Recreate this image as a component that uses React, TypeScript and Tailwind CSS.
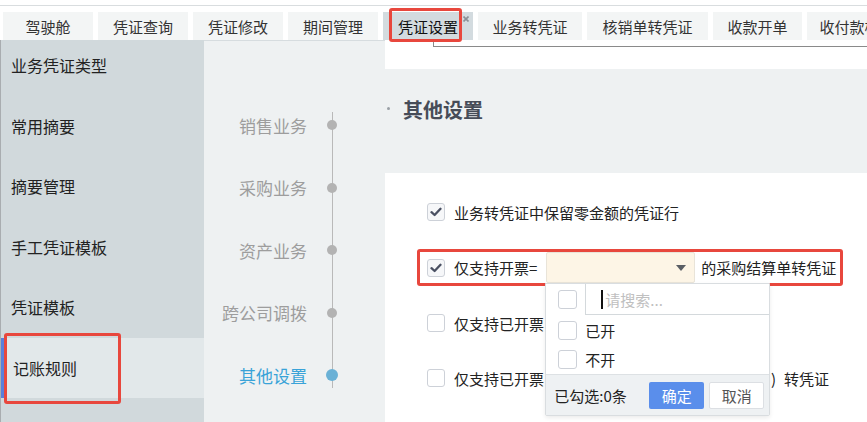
import React from 'react';

const tabs = [
  { t: '驾驶舱', w: 'w-[90px]' },
  { t: '凭证查询', w: 'w-[90px]' },
  { t: '凭证修改', w: 'w-[90px]' },
  { t: '期间管理', w: 'w-[90px]' },
  { t: '凭证设置', w: 'w-[90px]', active: true },
  { t: '业务转凭证', w: 'w-[104px]' },
  { t: '核销单转凭证', w: 'w-[121px]' },
  { t: '收款开单', w: 'w-[89px]' },
  { t: '收付款核销', w: 'w-[100px]' },
];

const sideItems = ['业务凭证类型', '常用摘要', '摘要管理', '手工凭证模板', '凭证模板', '记账规则'];
const steps = ['销售业务', '采购业务', '资产业务', '跨公司调拨', '其他设置'];

function Box({ checked = false, size = 'w-[18px] h-[18px]' }: { checked?: boolean; size?: string }) {
  return (
    <span
      className={`${size} shrink-0 rounded-[3px] border border-[#cdd1d8] flex items-center justify-center ${
        checked ? 'bg-[#f6f7f9]' : 'bg-white'
      }`}
    >
      {checked && (
        <svg width="12" height="10" viewBox="0 0 12 10">
          <path d="M1.5 5.2 L4.6 8 L10.5 1.8" fill="none" stroke="#4a5062" strokeWidth="2.3" strokeLinecap="round" strokeLinejoin="round" />
        </svg>
      )}
    </span>
  );
}

export default function App() {
  return (
    <div className="w-[867px] h-[422px] overflow-hidden bg-white flex flex-col font-['Noto_Sans_CJK_SC','Microsoft_YaHei',sans-serif] text-[#333]">
      {/* Tab bar */}
      <div className="h-[40px] shrink-0 pt-[5px] bg-white">
        <div className="border-t border-[#d9dddf] pt-[6px] pl-[3px] flex gap-[5px] whitespace-nowrap">
          {tabs.map((tab) => (
            <div
              key={tab.t}
              className={`${tab.w} h-[28px] shrink-0 relative flex items-center justify-center text-[15px] leading-none ${
                tab.active ? 'bg-[#d3dbdf] text-[#111]' : 'bg-[#f3f5f5] text-[#333]'
              }`}
            >
              {tab.t}
              {tab.active && (
                <>
                  <span className="absolute left-[6px] top-[-4px] w-[73px] h-[34px] border-[3px] border-[#e8473d] rounded-[3px]" />
                  <svg className="absolute right-[4px] top-[4px]" width="6" height="6" viewBox="0 0 6 6">
                    <path d="M0.5 0.5 L5.5 5.5 M5.5 0.5 L0.5 5.5" stroke="#8a8f95" strokeWidth="1.6" />
                  </svg>
                </>
              )}
            </div>
          ))}
        </div>
      </div>

      {/* Body */}
      <div className="flex flex-1 min-h-0">
        {/* Sidebar */}
        <div className="w-[204px] shrink-0 bg-[#d1d9dc] border-l border-[#a9adb0] relative overflow-hidden">
          <div className="-mt-[5px] flex flex-col">
            {sideItems.map((s, i) => {
              const active = i === sideItems.length - 1;
              return (
                <div
                  key={s}
                  className={`h-[60.5px] flex items-center text-[16px] leading-none text-[#222] ${
                    active ? 'bg-[#e2e8ea] border-l-[3px] border-[#5a7fdc] pl-[9px]' : 'pl-[10px]'
                  }`}
                >
                  {s}
                </div>
              );
            })}
          </div>
          <span className="absolute left-[3px] top-[293px] w-[117px] h-[71px] border-[3px] border-[#e8473d] rounded-[3px]" />
        </div>

        {/* Steps column */}
        <div className="w-[181px] shrink-0 bg-[#eef1f2] border-t border-[#d6dcdf] relative">
          <span className="absolute left-[128px] top-[71px] h-[276px] w-px bg-[#b9b9b9]" />
          <div className="pt-[53px] flex flex-col">
            {steps.map((s, i) => {
              const active = i === steps.length - 1;
              return (
                <div key={s} className="h-[62.5px] flex items-center">
                  <span
                    className={`w-[103px] text-right text-[17px] leading-none ${active ? 'text-[#39a3d8]' : 'text-[#9d9d9d]'}`}
                  >
                    {s}
                  </span>
                  <span className="ml-[13px] w-[24px] flex items-center justify-center relative">
                    <span
                      className={`rounded-full ${active ? 'w-[12px] h-[12px] bg-[#6ab1d6]' : 'w-[10px] h-[10px] bg-[#b3b3b3]'}`}
                    />
                  </span>
                </div>
              );
            })}
          </div>
        </div>

        {/* Right content */}
        <div className="flex-1 min-w-0 flex flex-col">
          <div className="h-[29px] shrink-0 bg-white">
            <div className="ml-[48px] mt-[2px] h-[5px] border-l border-b border-[#8a8a8a]" />
          </div>
          <div className="h-[104px] shrink-0 bg-[#eef1f2] flex items-start pl-[2px] pt-[31px]">
            <span className="w-[3px] h-[3px] rounded-full bg-[#9aa0a6] mt-[7px]" />
            <span className="ml-[13px] text-[20px] font-bold leading-none text-[#464c58]">其他设置</span>
          </div>
          <div className="flex-1 bg-white pt-[21px] flex flex-col gap-[19px]">
            {/* Row 1 */}
            <div className="ml-[32px] h-[36px] border-[3px] border-transparent pl-[7px] flex items-center">
              <Box checked />
              <span className="ml-[9px] text-[15px] leading-none text-[#222] whitespace-nowrap">业务转凭证中保留零金额的凭证行</span>
            </div>
            {/* Row 2 */}
            <div className="ml-[32px] w-[426px] h-[37px] border-[3px] border-[#e8473d] rounded-[3px] pl-[7px] flex items-center relative z-10">
              <Box checked />
              <span className="ml-[9px] text-[15px] leading-none text-[#222] whitespace-nowrap">仅支持开票=</span>
              <div className="ml-[9px] relative">
                <div className="w-[149px] h-[31px] bg-[#fdf5e6] border border-[#e9e4d9] rounded-[2px] flex items-center justify-end pr-[8px]">
                  <svg width="10" height="6" viewBox="0 0 10 6">
                    <polygon points="0,0 10,0 5,6" fill="#5a5e64" />
                  </svg>
                </div>
                {/* Dropdown */}
                <div className="absolute left-[-1px] top-full w-[225px] h-[133px] bg-white border border-[#d9dde0] rounded-b-[2px] shadow-[0_2px_4px_rgba(0,0,0,0.08)] flex flex-col">
                  <div className="h-[31px] flex items-stretch shrink-0">
                    <div className="w-[39px] flex items-center pl-[12px]">
                      <Box size="w-[19px] h-[19px]" />
                    </div>
                    <div className="flex-1 border-l border-b border-[#d4d9dc] flex items-center pl-[15px]">
                      <span className="w-[2px] h-[19px] bg-[#111]" />
                      <span className="ml-[2px] text-[15px] leading-none text-[#c0c0c0]">请搜索...</span>
                    </div>
                  </div>
                  <div className="h-[29px] flex items-center pl-[12px] shrink-0 mt-[1px]">
                    <Box size="w-[19px] h-[19px]" />
                    <span className="ml-[8px] text-[15px] leading-none text-[#222]">已开</span>
                  </div>
                  <div className="h-[29px] flex items-center pl-[12px] shrink-0">
                    <Box size="w-[19px] h-[19px]" />
                    <span className="ml-[8px] text-[15px] leading-none text-[#222]">不开</span>
                  </div>
                  <div className="flex-1 bg-[#eef1f3] border-t border-[#dde1e4] flex items-center pl-[8px] pr-[5px]">
                    <span className="text-[15px] leading-none text-[#222] whitespace-nowrap">已勾选:0条</span>
                    <span className="ml-auto w-[55px] h-[27px] bg-[#5a8eeb] text-white text-[15px] leading-none flex items-center justify-center rounded-[2px]">确定</span>
                    <span className="ml-[5px] w-[55px] h-[27px] bg-white border border-[#dcdfe3] text-[#555] text-[15px] leading-none flex items-center justify-center rounded-[2px]">取消</span>
                  </div>
                </div>
              </div>
              <span className="ml-[6px] text-[15px] leading-none text-[#222] whitespace-nowrap">的采购结算单转凭证</span>
            </div>
            {/* Row 3 */}
            <div className="ml-[32px] h-[36px] border-[3px] border-transparent pl-[7px] flex items-center">
              <Box />
              <span className="ml-[9px] shrink-0 text-[15px] leading-none text-[#222] whitespace-nowrap">仅支持已开票</span>
            </div>
            {/* Row 4 */}
            <div className="ml-[32px] h-[36px] border-[3px] border-transparent pl-[7px] flex items-center">
              <Box />
              <span className="ml-[9px] w-[92px] shrink-0 text-[15px] leading-none text-[#222] whitespace-nowrap">仅支持已开票</span>
              <span className="ml-[225px] text-[15px] leading-none text-[#222]">)</span>
              <span className="ml-[8px] text-[15px] leading-none text-[#222] whitespace-nowrap">转凭证</span>
            </div>
          </div>
        </div>
      </div>
    </div>
  );
}
